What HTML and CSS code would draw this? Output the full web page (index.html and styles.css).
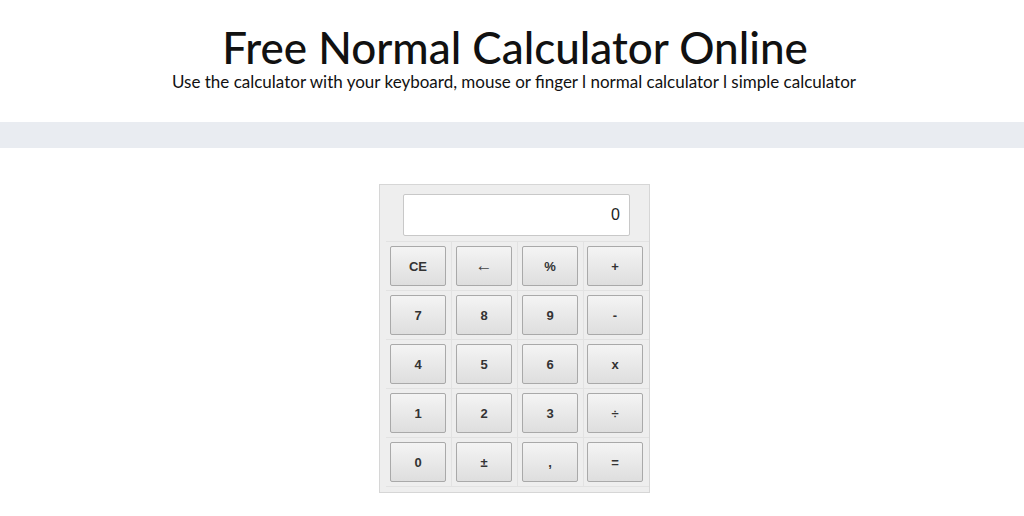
FILE: index.html
```html
<!DOCTYPE html>
<html>
<head>
<meta charset="utf-8">
<link rel="stylesheet" href="styles.css">
</head>
<body>
<header class="hero">
  <h1 class="title">Free Normal Calculator Online</h1>
  <p class="subtitle">Use the calculator with your keyboard, mouse or finger l normal calculator l simple calculator</p>
</header>
<div class="band"></div>
<main class="main">
  <div class="calc">
    <table class="grid">
      <tr><td colspan="4" class="display-cell"><div class="display">0</div></td></tr>
      <tr><td><button class="key">CE</button></td><td><button class="key thin">←</button></td><td><button class="key">%</button></td><td><button class="key">+</button></td></tr>
      <tr><td><button class="key">7</button></td><td><button class="key">8</button></td><td><button class="key">9</button></td><td><button class="key">-</button></td></tr>
      <tr><td><button class="key">4</button></td><td><button class="key">5</button></td><td><button class="key">6</button></td><td><button class="key">x</button></td></tr>
      <tr><td><button class="key">1</button></td><td><button class="key">2</button></td><td><button class="key">3</button></td><td><button class="key">÷</button></td></tr>
      <tr><td><button class="key">0</button></td><td><button class="key">±</button></td><td><button class="key">,</button></td><td><button class="key">=</button></td></tr>
    </table>
  </div>
</main>
</body>
</html>
```
FILE: styles.css
```css
html, body { margin: 0; padding: 0; background: #fff; }
body { font-family: Lato, "Noto Sans", sans-serif; color: #111; }
.hero { text-align: center; padding-top: 23px; height: 98px; box-sizing: border-box; }
.title { margin: 0; font-size: 44px; font-weight: 500; line-height: 48px; color: #111; padding-left: 6px; }
.subtitle { margin: 0; font-size: 17px; line-height: 22px; color: #111; padding-left: 4px; }
.band { height: 26px; background: #e9ecf1; margin-top: 24px; }
.main { display: flex; justify-content: center; padding-top: 36px; padding-left: 5px; }
.calc { width: 271px; box-sizing: border-box; border: 1px solid #d6d6d6; background: #eeeeee; padding: 0 0 5px 6px; }
.grid { border-collapse: collapse; }
.grid td { border: 1px solid #e2e2e2; padding: 4px; width: 57px; height: 40px; text-align: center; }
.grid td:last-child { padding-left: 3px; padding-right: 5px; }
.grid tr:first-child td { border-top: none; }
.grid td:first-child { border-left: none; }
.grid td:last-child { border-right: none; }
.display-cell { padding: 9px 19px 5px 17px !important; }
.display { height: 40px; background: #fff; border: 1px solid #c8c8c8; border-radius: 2px; text-align: right; font: 16px "Liberation Sans", Arial, sans-serif; line-height: 40px; padding-right: 9px; color: #222; }
.key { width: 56px; height: 40px; border: 1px solid #a9a9a9; border-radius: 2px; background: linear-gradient(#f4f4f4, #dedede); font: bold 13px "Liberation Sans", Arial, sans-serif; color: #333; padding: 0; margin: 0; display: block; }
.thin { font-weight: normal; font-size: 17px; color: #444; }
```
